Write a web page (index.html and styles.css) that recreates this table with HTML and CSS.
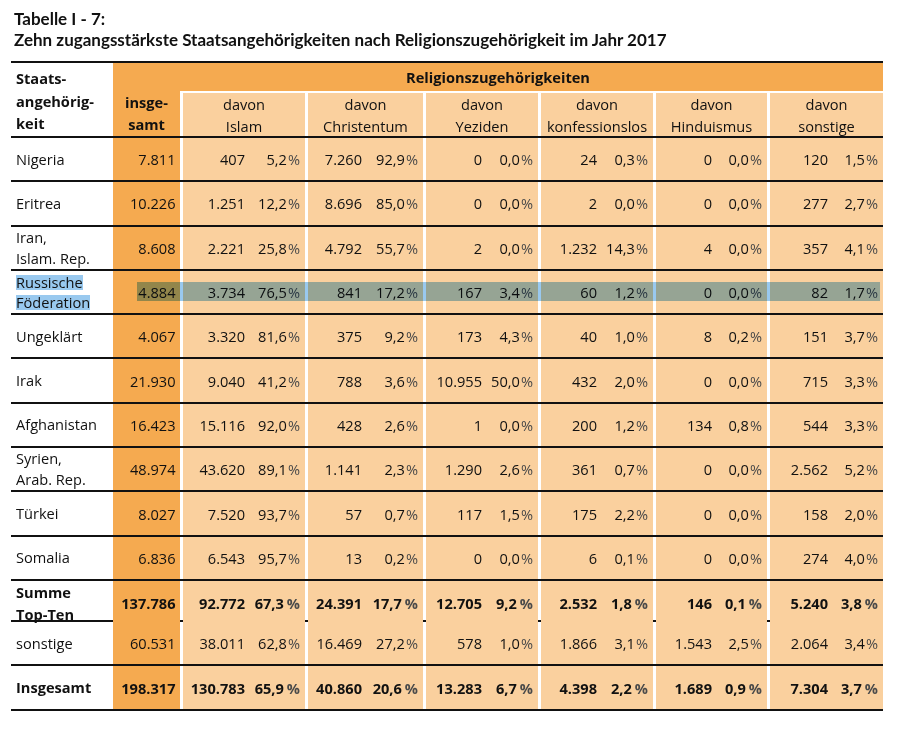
FILE: index.html
```html
<!DOCTYPE html>
<html lang="de">
<head>
<meta charset="utf-8">
<title>Tabelle I - 7</title>
<link rel="stylesheet" href="styles.css">
</head>
<body>
<div class="page">
  <h1 class="title">Tabelle I - 7:<br>Zehn zugangsstärkste Staatsangehörigkeiten nach Religionszugehörigkeit im Jahr 2017</h1>
  <div class="table">
    <div class="grid head">
      <div class="h-ctry">Staats-<br>angehörig-<br>keit</div>
      <div class="h-rel">Religionszugehörigkeiten</div>
      <div class="h-tot">insge-<br>samt</div>
      <div class="h-c">davon<br>Islam</div>
      <div class="h-c">davon<br>Christentum</div>
      <div class="h-c">davon<br>Yeziden</div>
      <div class="h-c">davon<br>konfessionslos</div>
      <div class="h-c">davon<br>Hinduismus</div>
      <div class="h-c">davon<br>sonstige</div>
    </div>

    <div class="grid row">
      <div class="ctry"><div>Nigeria</div></div><div class="tot">7.811</div>
      <div class="c"><span>407</span><span>5,2<i>%</i></span></div>
      <div class="c"><span>7.260</span><span>92,9<i>%</i></span></div>
      <div class="c"><span>0</span><span>0,0<i>%</i></span></div>
      <div class="c"><span>24</span><span>0,3<i>%</i></span></div>
      <div class="c"><span>0</span><span>0,0<i>%</i></span></div>
      <div class="c"><span>120</span><span>1,5<i>%</i></span></div>
    </div>
    <div class="grid row">
      <div class="ctry"><div>Eritrea</div></div><div class="tot">10.226</div>
      <div class="c"><span>1.251</span><span>12,2<i>%</i></span></div>
      <div class="c"><span>8.696</span><span>85,0<i>%</i></span></div>
      <div class="c"><span>0</span><span>0,0<i>%</i></span></div>
      <div class="c"><span>2</span><span>0,0<i>%</i></span></div>
      <div class="c"><span>0</span><span>0,0<i>%</i></span></div>
      <div class="c"><span>277</span><span>2,7<i>%</i></span></div>
    </div>
    <div class="grid row">
      <div class="ctry"><div>Iran,<br>Islam. Rep.</div></div><div class="tot">8.608</div>
      <div class="c"><span>2.221</span><span>25,8<i>%</i></span></div>
      <div class="c"><span>4.792</span><span>55,7<i>%</i></span></div>
      <div class="c"><span>2</span><span>0,0<i>%</i></span></div>
      <div class="c"><span>1.232</span><span>14,3<i>%</i></span></div>
      <div class="c"><span>4</span><span>0,0<i>%</i></span></div>
      <div class="c"><span>357</span><span>4,1<i>%</i></span></div>
    </div>
    <div class="grid row russ">
      <div class="ctry"><div class="selbox"><span class="sel">Russische</span><br><span class="sel">Föderation</span></div></div><div class="tot">4.884</div>
      <div class="c"><span>3.734</span><span>76,5<i>%</i></span></div>
      <div class="c"><span>841</span><span>17,2<i>%</i></span></div>
      <div class="c"><span>167</span><span>3,4<i>%</i></span></div>
      <div class="c"><span>60</span><span>1,2<i>%</i></span></div>
      <div class="c"><span>0</span><span>0,0<i>%</i></span></div>
      <div class="c"><span>82</span><span>1,7<i>%</i></span></div>
      <div class="hl"></div>
    </div>
    <div class="grid row">
      <div class="ctry"><div>Ungeklärt</div></div><div class="tot">4.067</div>
      <div class="c"><span>3.320</span><span>81,6<i>%</i></span></div>
      <div class="c"><span>375</span><span>9,2<i>%</i></span></div>
      <div class="c"><span>173</span><span>4,3<i>%</i></span></div>
      <div class="c"><span>40</span><span>1,0<i>%</i></span></div>
      <div class="c"><span>8</span><span>0,2<i>%</i></span></div>
      <div class="c"><span>151</span><span>3,7<i>%</i></span></div>
    </div>
    <div class="grid row">
      <div class="ctry"><div>Irak</div></div><div class="tot">21.930</div>
      <div class="c"><span>9.040</span><span>41,2<i>%</i></span></div>
      <div class="c"><span>788</span><span>3,6<i>%</i></span></div>
      <div class="c"><span>10.955</span><span>50,0<i>%</i></span></div>
      <div class="c"><span>432</span><span>2,0<i>%</i></span></div>
      <div class="c"><span>0</span><span>0,0<i>%</i></span></div>
      <div class="c"><span>715</span><span>3,3<i>%</i></span></div>
    </div>
    <div class="grid row">
      <div class="ctry"><div>Afghanistan</div></div><div class="tot">16.423</div>
      <div class="c"><span>15.116</span><span>92,0<i>%</i></span></div>
      <div class="c"><span>428</span><span>2,6<i>%</i></span></div>
      <div class="c"><span>1</span><span>0,0<i>%</i></span></div>
      <div class="c"><span>200</span><span>1,2<i>%</i></span></div>
      <div class="c"><span>134</span><span>0,8<i>%</i></span></div>
      <div class="c"><span>544</span><span>3,3<i>%</i></span></div>
    </div>
    <div class="grid row">
      <div class="ctry"><div>Syrien,<br>Arab. Rep.</div></div><div class="tot">48.974</div>
      <div class="c"><span>43.620</span><span>89,1<i>%</i></span></div>
      <div class="c"><span>1.141</span><span>2,3<i>%</i></span></div>
      <div class="c"><span>1.290</span><span>2,6<i>%</i></span></div>
      <div class="c"><span>361</span><span>0,7<i>%</i></span></div>
      <div class="c"><span>0</span><span>0,0<i>%</i></span></div>
      <div class="c"><span>2.562</span><span>5,2<i>%</i></span></div>
    </div>
    <div class="grid row">
      <div class="ctry"><div>Türkei</div></div><div class="tot">8.027</div>
      <div class="c"><span>7.520</span><span>93,7<i>%</i></span></div>
      <div class="c"><span>57</span><span>0,7<i>%</i></span></div>
      <div class="c"><span>117</span><span>1,5<i>%</i></span></div>
      <div class="c"><span>175</span><span>2,2<i>%</i></span></div>
      <div class="c"><span>0</span><span>0,0<i>%</i></span></div>
      <div class="c"><span>158</span><span>2,0<i>%</i></span></div>
    </div>
    <div class="grid row">
      <div class="ctry"><div>Somalia</div></div><div class="tot">6.836</div>
      <div class="c"><span>6.543</span><span>95,7<i>%</i></span></div>
      <div class="c"><span>13</span><span>0,2<i>%</i></span></div>
      <div class="c"><span>0</span><span>0,0<i>%</i></span></div>
      <div class="c"><span>6</span><span>0,1<i>%</i></span></div>
      <div class="c"><span>0</span><span>0,0<i>%</i></span></div>
      <div class="c"><span>274</span><span>4,0<i>%</i></span></div>
    </div>
    <div class="grid row bold sum">
      <div class="ctry"><div>Summe<br>Top-Ten</div></div><div class="tot">137.786</div>
      <div class="c"><span>92.772</span><span>67,3<i>%</i></span></div>
      <div class="c"><span>24.391</span><span>17,7<i>%</i></span></div>
      <div class="c"><span>12.705</span><span>9,2<i>%</i></span></div>
      <div class="c"><span>2.532</span><span>1,8<i>%</i></span></div>
      <div class="c"><span>146</span><span>0,1<i>%</i></span></div>
      <div class="c"><span>5.240</span><span>3,8<i>%</i></span></div>
    </div>
    <div class="grid row other">
      <div class="ctry"><div>sonstige</div></div><div class="tot">60.531</div>
      <div class="c"><span>38.011</span><span>62,8<i>%</i></span></div>
      <div class="c"><span>16.469</span><span>27,2<i>%</i></span></div>
      <div class="c"><span>578</span><span>1,0<i>%</i></span></div>
      <div class="c"><span>1.866</span><span>3,1<i>%</i></span></div>
      <div class="c"><span>1.543</span><span>2,5<i>%</i></span></div>
      <div class="c"><span>2.064</span><span>3,4<i>%</i></span></div>
    </div>
    <div class="grid row bold last">
      <div class="ctry"><div>Insgesamt</div></div><div class="tot">198.317</div>
      <div class="c"><span>130.783</span><span>65,9<i>%</i></span></div>
      <div class="c"><span>40.860</span><span>20,6<i>%</i></span></div>
      <div class="c"><span>13.283</span><span>6,7<i>%</i></span></div>
      <div class="c"><span>4.398</span><span>2,2<i>%</i></span></div>
      <div class="c"><span>1.689</span><span>0,9<i>%</i></span></div>
      <div class="c"><span>7.304</span><span>3,7<i>%</i></span></div>
    </div>
  </div>
</div>
</body>
</html>
```

FILE: styles.css
```css
* { box-sizing: border-box; }
body {
  margin: 0;
  background: #fff;
  font-family: "Open Sans", "Noto Sans", sans-serif;
  color: #111;
  font-size: 14.6px;
}
.page {
  padding: 8px 0 0 11px;
  width: 883px;
}
.title {
  margin: 0 0 0 3px;
  font-family: Lato, "Open Sans", sans-serif;
  font-size: 17px;
  line-height: 21px;
  font-weight: 700;
  color: #111;
}
.table {
  margin-top: 11px;
  border-top: 2.5px solid #111;
  width: 872px;
}
.grid {
  display: grid;
  grid-template-columns: 99px 67px 122px 115px 112px 112px 111px 113px;
  column-gap: 3px;
}
.head {
  grid-template-rows: 28px 45px;
  border-bottom: 2px solid #111;
}
.h-ctry {
  grid-row: 1 / 3;
  font-weight: 700;
  line-height: 22.5px;
  padding: 4px 0 0 5px;
}
.h-rel {
  grid-column: 2 / 9;
  background: #f5aa50;
  font-weight: 700;
  text-align: center;
  line-height: 28px;
}
.h-tot {
  background: #f5aa50;
  font-weight: 700;
  text-align: center;
  line-height: 22px;
}
.h-c {
  background: #fad09e;
  margin-top: 2px;
  text-align: center;
  line-height: 22px;
  padding-top: 0;
}
.row {
  height: 44.3px;
  border-bottom: 2px solid #111;
}
.row.sum { height: 41.3px; }
.row.other { height: 43.7px; }
.row.last { height: 45.5px; border-bottom-width: 2.5px; }
.bold { font-weight: 700; }
.ctry {
  display: flex;
  align-items: center;
  padding-left: 5px;
  line-height: 21px;
}
.sum .ctry { line-height: 22px; }
.tot {
  background: #f5aa50;
  display: flex;
  align-items: center;
  justify-content: flex-end;
  padding-right: 4.5px;
}
.c {
  background: #fad09e;
  display: grid;
  grid-template-columns: 1fr 51px;
  align-items: center;
  text-align: right;
  padding-right: 5px;
}
.row .c:nth-child(3) { grid-template-columns: 1fr 55px; }
.row .c:nth-child(4) { grid-template-columns: 1fr 56px; }
.row .c:nth-child(7),
.row .c:nth-child(8) { grid-template-columns: 1fr 50px; }
.c i {
  font-style: normal;
  color: #4a4a4a;
  margin-left: 1px;
}
.bold .c i { margin-left: 3px; }
.russ { position: relative; }
.selbox { line-height: 20.5px; }
.sel {
  display: inline-block;
  line-height: 15px;
  background: #99c9ef;
}
.hl {
  position: absolute;
  left: 125.7px;
  top: 10.8px;
  width: 743px;
  height: 19px;
  background: #99c9ef;
  mix-blend-mode: multiply;
}
```
